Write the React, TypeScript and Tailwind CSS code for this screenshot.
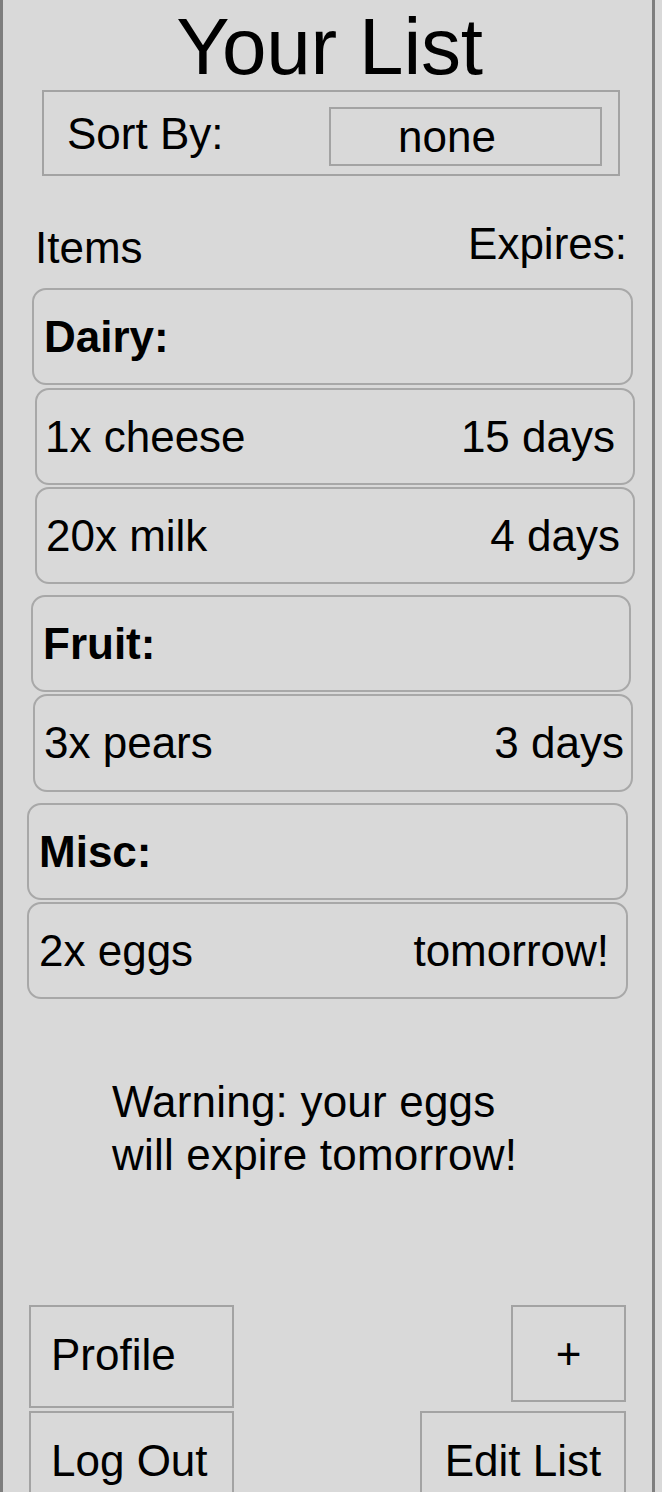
import React from "react";

type Row = {
  left: string;
  right?: string;
  bold?: boolean;
  cls: string;
  pl: string;
  pr: string;
};

const rows: Row[] = [
  { left: "Dairy:", bold: true, cls: "mt-[15px] ml-[29px] w-[601px] h-[97px]", pl: "pl-[10px]", pr: "pr-[16px]" },
  { left: "1x cheese", right: "15 days", cls: "mt-[3px] ml-[32px] w-[600px] h-[97px]", pl: "pl-[8px]", pr: "pr-[18px]" },
  { left: "20x milk", right: "4 days", cls: "mt-[2px] ml-[32px] w-[600px] h-[97px]", pl: "pl-[9px]", pr: "pr-[13px]" },
  { left: "Fruit:", bold: true, cls: "mt-[11px] ml-[28px] w-[600px] h-[97px]", pl: "pl-[10px]", pr: "pr-[16px]" },
  { left: "3x pears", right: "3 days", cls: "mt-[2px] ml-[30px] w-[600px] h-[98px]", pl: "pl-[9px]", pr: "pr-[7px]" },
  { left: "Misc:", bold: true, cls: "mt-[11px] ml-[24px] w-[601px] h-[97px]", pl: "pl-[10px]", pr: "pr-[16px]" },
  { left: "2x eggs", right: "tomorrow!", cls: "mt-[2px] ml-[24px] w-[601px] h-[97px]", pl: "pl-[10px]", pr: "pr-[17px]" },
];

export default function App() {
  return (
    <div className="w-[662px] h-[1492px] overflow-hidden bg-[#d9d9d9] text-black font-['Liberation_Sans','Helvetica',sans-serif]">
      <div className="w-[655px] h-[1492px] border-l-[3px] border-r-[3px] border-[#7e7e7e] flex flex-col">
        {/* Title */}
        <div className="shrink-0 pt-[7px] h-[87px] text-[80px] leading-[80px] tracking-[-0.2px] text-center pl-[4px]">
          Your List
        </div>

        {/* Sort box */}
        <div className="shrink-0 mt-[3px] ml-[39px] w-[578px] h-[86px] border-2 border-[#a3a3a3] flex items-center justify-between pl-[23px] pr-[16px]">
          <span className="text-[44px] leading-[50px] mt-[2px]">Sort By:</span>
          <div className="mt-[7px] w-[273px] h-[59px] border-2 border-[#a3a3a3] flex items-center pl-[67px] text-[44px] leading-[50px]">
            none
          </div>
        </div>

        {/* Header */}
        <div className="shrink-0 mt-[43px] flex justify-between pl-[32px] pr-[25px]">
          <span className="mt-[4px] text-[44px] leading-[50px]">Items</span>
          <span className="text-[44px] leading-[50px]">Expires:</span>
        </div>

        {/* Cards */}
        <div className="shrink-0 flex flex-col">
          {rows.map((r, i) => (
            <div
              key={i}
              className={`${r.cls} ${r.pl} ${r.pr} shrink-0 border-2 border-[#a8a8a8] rounded-[14px] flex items-center justify-between text-[44px] leading-[50px]`}
            >
              <span className={r.bold ? "font-bold" : ""}>{r.left}</span>
              {r.right ? <span>{r.right}</span> : null}
            </div>
          ))}
        </div>

        {/* Warning */}
        <div className="shrink-0 mt-[76px] ml-[109px] text-[44px] leading-[53px] tracking-[0.2px]">
          <div>Warning: your eggs</div>
          <div>will expire tomorrow!</div>
        </div>

        {/* Bottom buttons */}
        <div className="shrink-0 mt-[124px] flex justify-between pl-[26px] pr-[26px]">
          <div className="flex flex-col">
            <div className="shrink-0 w-[205px] h-[103px] border-2 border-[#a3a3a3] flex items-center pl-[20px] text-[44px] leading-[50px]">
              <span className="-mt-[3px]">Profile</span>
            </div>
            <div className="shrink-0 mt-[3px] w-[205px] h-[100px] border-2 border-[#a3a3a3] flex items-center pl-[20px] text-[44px] leading-[50px]">
              Log Out
            </div>
          </div>
          <div className="flex flex-col items-end">
            <div className="shrink-0 w-[115px] h-[97px] border-2 border-[#a3a3a3] flex items-center justify-center text-[44px] leading-[50px]">
              +
            </div>
            <div className="shrink-0 mt-[9px] w-[206px] h-[100px] border-2 border-[#a3a3a3] flex items-center justify-center text-[44px] leading-[50px]">
              Edit List
            </div>
          </div>
        </div>
      </div>
    </div>
  );
}
